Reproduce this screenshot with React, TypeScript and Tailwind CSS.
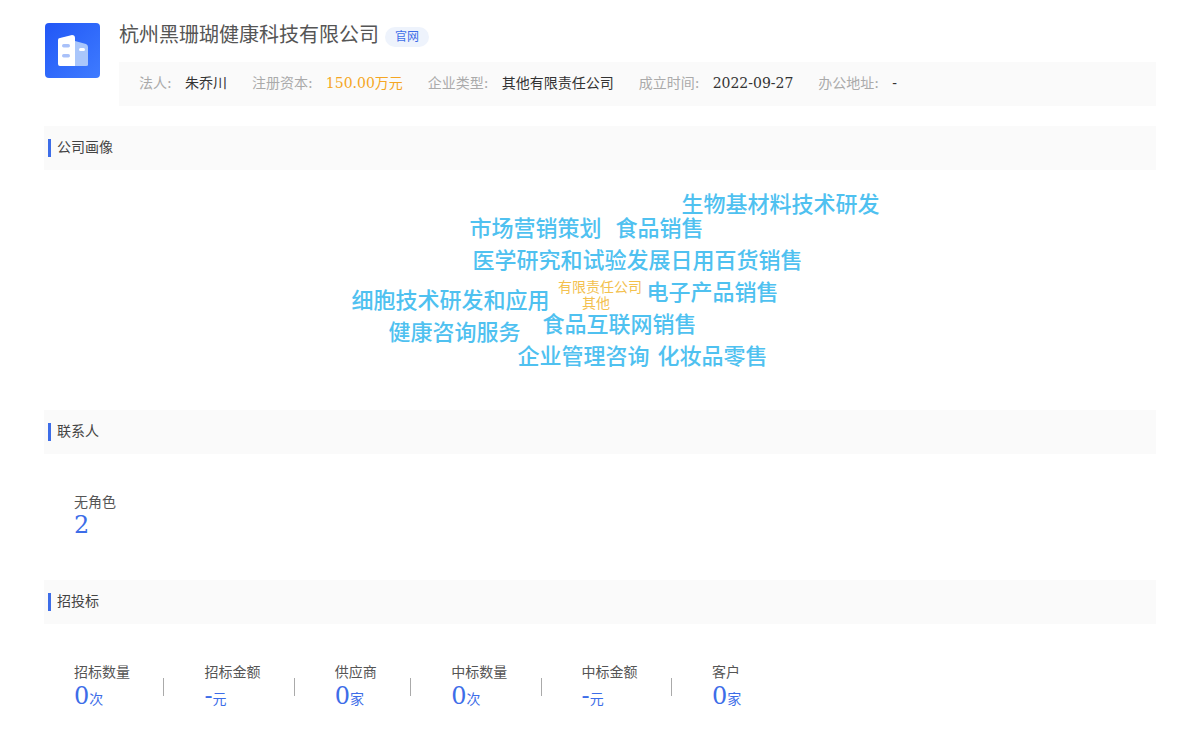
const fontStack = "font-['DejaVu_Serif','Noto_Sans_CJK_SC',serif]";

const cloudWords = [
  { text: "生物基材料技术研发", left: 337, top: 4 },
  { text: "市场营销策划", left: 125, top: 28 },
  { text: "食品销售", left: 271, top: 28 },
  { text: "医学研究和试验发展", left: 128, top: 60 },
  { text: "日用百货销售", left: 326, top: 60 },
  { text: "电子产品销售", left: 302, top: 92 },
  { text: "细胞技术研发和应用", left: 7, top: 100 },
  { text: "食品互联网销售", left: 198, top: 124 },
  { text: "健康咨询服务", left: 44, top: 132 },
  { text: "企业管理咨询", left: 173, top: 156 },
  { text: "化妆品零售", left: 313, top: 156 },
];

const infoItems = [
  { label: "法人", value: "朱乔川", color: "text-[#333333]" },
  { label: "注册资本", value: "150.00万元", color: "text-[#f5a623]" },
  { label: "企业类型", value: "其他有限责任公司", color: "text-[#333333]" },
  { label: "成立时间", value: "2022-09-27", color: "text-[#333333]" },
  { label: "办公地址", value: "-", color: "text-[#333333]" },
];

const bidStats = [
  { label: "招标数量", value: "0", unit: "次", width: "w-[56px]" },
  { label: "招标金额", value: "-", unit: "元", width: "w-[56px]" },
  { label: "供应商", value: "0", unit: "家", width: "w-[42px]" },
  { label: "中标数量", value: "0", unit: "次", width: "w-[56px]" },
  { label: "中标金额", value: "-", unit: "元", width: "w-[56px]" },
  { label: "客户", value: "0", unit: "家", width: "w-[42px]" },
];

function SectionTitle({ title }: { title: string }) {
  return (
    <div className="flex h-[44px] items-center bg-[#fafafa] pl-1">
      <span className="mr-[6px] h-[18px] w-[3px] bg-[#3d6de8]" />
      <span className="pb-[2px] text-[14px] leading-[20px] text-[#444444]">{title}</span>
    </div>
  );
}

function Logo() {
  return (
    <div className="flex h-[55px] w-[55px] shrink-0 items-center justify-center rounded-[4px] bg-gradient-to-br from-[#2256f6] to-[#3f7bff]">
      <svg width="30" height="32" viewBox="0 0 30 32">
        <path d="M17 6 L28 9 Q30 10 30 12 V30 Q30 31 28 31 H17 Z" fill="#a9c6fb" />
        <path d="M0 5 Q0 3 2 3 L14 0 Q17 0 17 3 V31 H2 Q0 31 0 29 Z" fill="#ffffff" />
        <rect x="4" y="9" width="8" height="3.5" rx="1.7" fill="#a9c1f9" />
        <rect x="4" y="19" width="8" height="3.5" rx="1.7" fill="#a9c1f9" />
        <rect x="21" y="13" width="6" height="3" rx="1.5" fill="#ffffff" />
      </svg>
    </div>
  );
}

export default function App() {
  return (
    <div className={`${fontStack} h-[752px] w-[1200px] overflow-hidden bg-white px-[44px] text-[#333333]`}>
      {/* Header */}
      <div className="flex pt-[23px] pl-px">
        <Logo />
        <div className="ml-[19px] flex-1">
          <div className="flex h-[24px] items-center">
            <span className="text-[20px] leading-[24px] text-[#555555]">杭州黑珊瑚健康科技有限公司</span>
            <span className="ml-[6px] mt-[3px] rounded-[10px] bg-[#eef3fc] px-[10px] py-[1px] text-[12px] leading-[18px] text-[#3d6de8]">
              官网
            </span>
          </div>
          <div className="mt-[15px] flex h-[44px] items-center bg-[#fafafa] pb-[2px] pl-[20px]">
            {infoItems.map((item) => (
              <div key={item.label} className="mr-[25px] flex items-center text-[14px] whitespace-nowrap">
                <span className="mr-[13.2px] text-[#aaaaaa]">{item.label}:</span>
                <span className={item.color}>{item.value}</span>
              </div>
            ))}
          </div>
        </div>
      </div>

      {/* 公司画像 */}
      <div className="mt-[20px]">
        <SectionTitle title="公司画像" />
        <div className="relative ml-[300.5px] h-[240px] w-[540px] font-['Noto_Sans_CJK_SC',sans-serif]">
          {cloudWords.map((w) => (
            <span
              key={w.text}
              className="absolute text-[22px] leading-[28px] font-medium whitespace-nowrap text-[#4fc1f0]"
              style={{ left: w.left, top: w.top + 14 }}
            >
              {w.text}
            </span>
          ))}
          <span
            className="absolute text-[14px] leading-[14px] whitespace-nowrap text-[#f3c14f]"
            style={{ left: 213.5, top: 109 }}
          >
            有限责任公司
          </span>
          <span
            className="absolute text-[14px] leading-[14px] whitespace-nowrap text-[#f3c14f]"
            style={{ left: 237.5, top: 125 }}
          >
            其他
          </span>
        </div>
      </div>

      {/* 联系人 */}
      <SectionTitle title="联系人" />
      <div className="flex h-[126px] flex-col pt-[38px] pl-[30px]">
        <span className="text-[14px] leading-[20px] text-[#555555]">无角色</span>
        <span className="text-[24px] leading-[26px] text-[#3d6de8]">2</span>
      </div>

      {/* 招投标 */}
      <SectionTitle title="招投标" />
      <div className="flex pt-[38px] pl-[30px]">
        {bidStats.map((s, i) => (
          <div key={s.label} className="flex">
            <div className={`${s.width} flex flex-col whitespace-nowrap`}>
              <span className="mb-px text-[14px] leading-[20px] text-[#555555]">{s.label}</span>
              <span className="text-[24px] leading-[26px] text-[#3d6de8]">
                {s.value}
                <span className="text-[14px]">{s.unit}</span>
              </span>
            </div>
            {i < bidStats.length - 1 && (
              <span className="mt-[16px] mr-[40px] ml-[33.4px] h-[18px] w-px bg-[#aaaaaa]" />
            )}
          </div>
        ))}
      </div>
    </div>
  );
}
